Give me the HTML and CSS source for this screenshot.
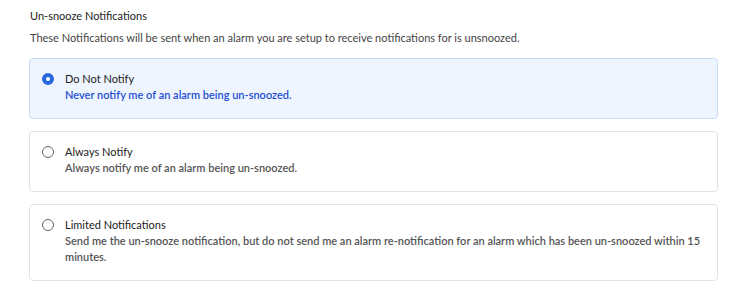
FILE: index.html
```html
<!DOCTYPE html>
<html lang="en">
<head>
    <meta charset="UTF-8">
    <title>Un-snooze Notifications</title>
    <link rel="stylesheet" href="styles.css">
</head>
<body>
    <div class="section">
        <h2 class="section-title">Un-snooze Notifications</h2>
        <p class="section-desc">These Notifications will be sent when an alarm you are setup to receive notifications for is unsnoozed.</p>

        <label class="option selected">
            <input type="radio" name="unsnooze" value="none" checked>
            <span class="radio"></span>
            <span class="option-text">
                <span class="option-title">Do Not Notify</span>
                <span class="option-desc">Never notify me of an alarm being un-snoozed.</span>
            </span>
        </label>

        <label class="option">
            <input type="radio" name="unsnooze" value="always">
            <span class="radio"></span>
            <span class="option-text">
                <span class="option-title">Always Notify</span>
                <span class="option-desc">Always notify me of an alarm being un-snoozed.</span>
            </span>
        </label>

        <label class="option">
            <input type="radio" name="unsnooze" value="limited">
            <span class="radio"></span>
            <span class="option-text">
                <span class="option-title">Limited Notifications</span>
                <span class="option-desc">Send me the un-snooze notification, but do not send me an alarm re-notification for an alarm which has been un-snoozed within 15 minutes.</span>
            </span>
        </label>
    </div>
</body>
</html>
```

FILE: styles.css
```css
body {
    margin: 0;
    font-family: Lato, "Open Sans", sans-serif;
    font-size: 11px;
    color: #333;
    background-color: white;
}
.section {
    padding: 8px 19px 0 29px;
}
.section-title {
    margin: 0 0 6px 1px;
    font-size: 11px;
    font-weight: normal;
    line-height: 16px;
    color: #222;
}
.section-desc {
    margin: 0 0 12px 1px;
    line-height: 16px;
    color: #444;
}
.option {
    display: flex;
    align-items: flex-start;
    gap: 11px;
    padding: 12px 16px 15px 12px;
    margin-bottom: 12px;
    border: 1px solid #e2e2e2;
    border-radius: 4px;
    background-color: white;
    cursor: pointer;
}
.option input {
    display: none;
}
.radio {
    flex: none;
    width: 10px;
    height: 10px;
    margin-top: 2px;
    border: 1px solid #666;
    border-radius: 50%;
    background-color: white;
}
.option.selected {
    background-color: #eef5ff;
    border-color: #c5dcf7;
}
.option.selected .radio {
    width: 4px;
    height: 4px;
    border: 4px solid #2767e0;
}
.option-text {
    display: flex;
    flex-direction: column;
    line-height: 16px;
}
.option-title {
    color: #222;
}
.option-desc {
    font-weight: 600;
    color: #555;
}
.option.selected .option-desc {
    color: #1f4fd1;
}
```
